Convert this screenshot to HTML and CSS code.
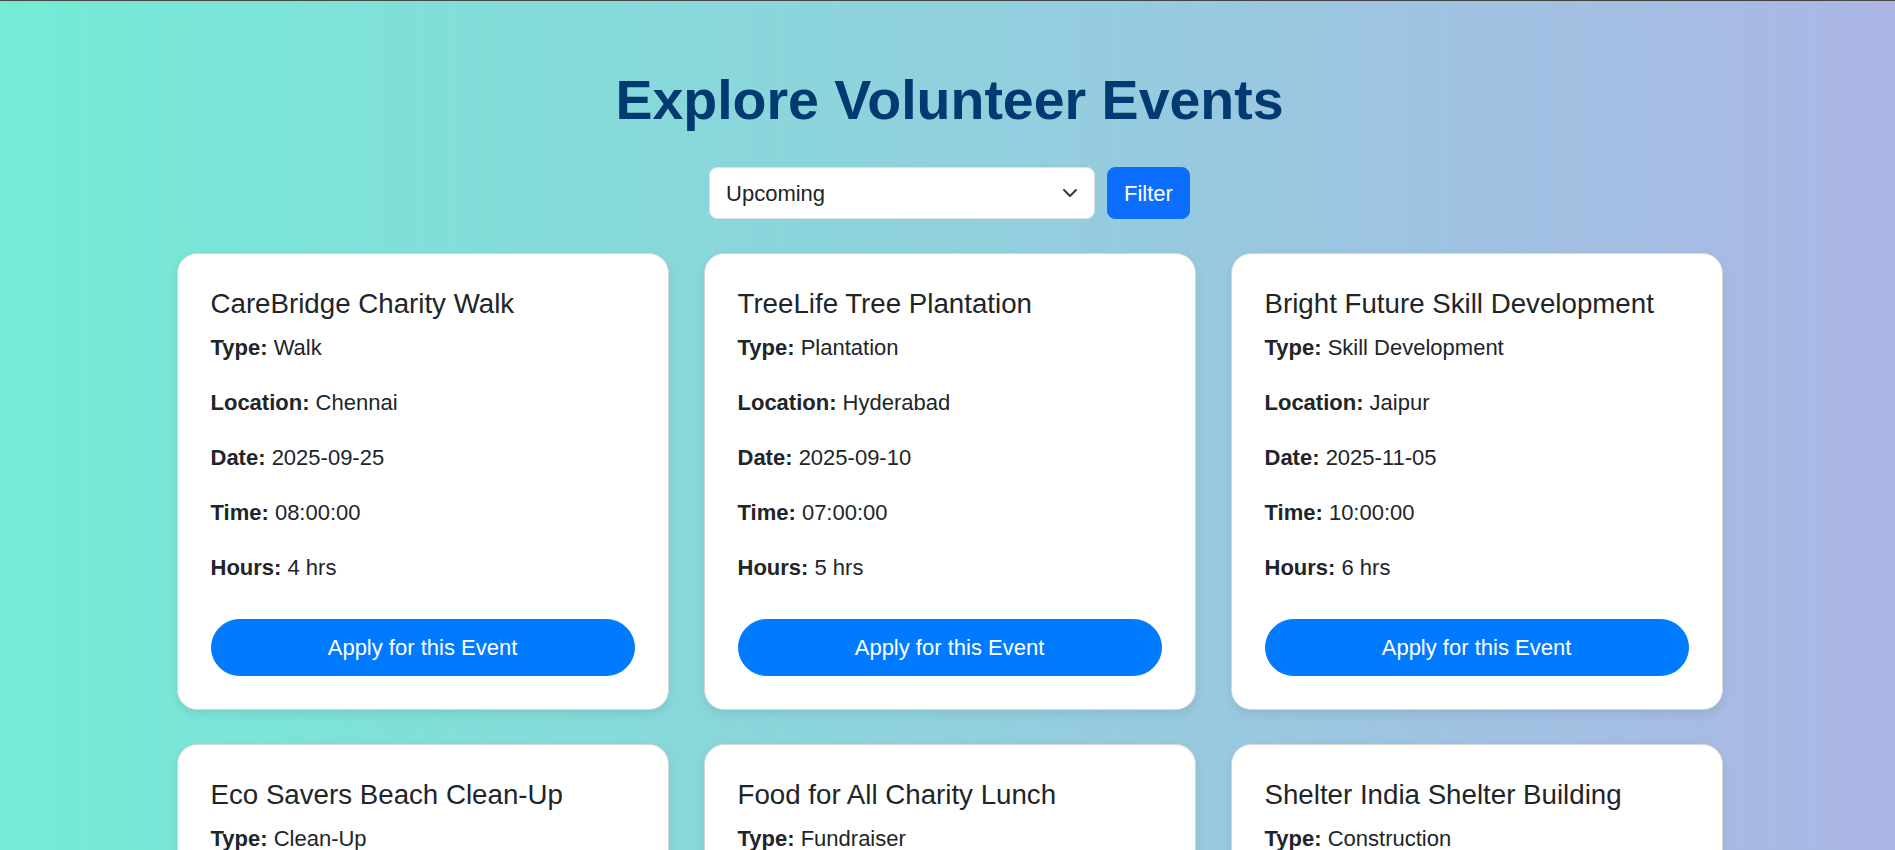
FILE: index.html
```html
<!DOCTYPE html>
<html lang="en">
<head>
<meta charset="utf-8">
<title>Explore Volunteer Events</title>
<link rel="stylesheet" href="styles.css">
</head>
<body>
<main class="page">
  <h1 class="page-title">Explore Volunteer Events</h1>
  <form class="filter-bar">
    <div class="select-wrap">
      <select class="filter-select">
        <option>Upcoming</option>
        <option>Past</option>
        <option>All</option>
      </select>
      <svg class="select-chevron" width="16" height="16" viewBox="0 0 16 16" aria-hidden="true"><path d="M2 5l6 6 6-6" fill="none" stroke="#343a40" stroke-width="2" stroke-linecap="round" stroke-linejoin="round"/></svg>
    </div>
    <button type="button" class="filter-btn">Filter</button>
  </form>

  <section class="event-grid">
    <article class="event-card">
      <h5 class="event-title">CareBridge Charity Walk</h5>
      <p><strong>Type:</strong> Walk</p>
      <p><strong>Location:</strong> Chennai</p>
      <p><strong>Date:</strong> 2025-09-25</p>
      <p><strong>Time:</strong> 08:00:00</p>
      <p><strong>Hours:</strong> 4 hrs</p>
      <button type="button" class="apply-btn">Apply for this Event</button>
    </article>
    <article class="event-card">
      <h5 class="event-title">TreeLife Tree Plantation</h5>
      <p><strong>Type:</strong> Plantation</p>
      <p><strong>Location:</strong> Hyderabad</p>
      <p><strong>Date:</strong> 2025-09-10</p>
      <p><strong>Time:</strong> 07:00:00</p>
      <p><strong>Hours:</strong> 5 hrs</p>
      <button type="button" class="apply-btn">Apply for this Event</button>
    </article>
    <article class="event-card">
      <h5 class="event-title">Bright Future Skill Development</h5>
      <p><strong>Type:</strong> Skill Development</p>
      <p><strong>Location:</strong> Jaipur</p>
      <p><strong>Date:</strong> 2025-11-05</p>
      <p><strong>Time:</strong> 10:00:00</p>
      <p><strong>Hours:</strong> 6 hrs</p>
      <button type="button" class="apply-btn">Apply for this Event</button>
    </article>
    <article class="event-card">
      <h5 class="event-title">Eco Savers Beach Clean-Up</h5>
      <p><strong>Type:</strong> Clean-Up</p>
      <p><strong>Location:</strong> Mumbai</p>
      <p><strong>Date:</strong> 2025-10-02</p>
      <p><strong>Time:</strong> 06:30:00</p>
      <p><strong>Hours:</strong> 3 hrs</p>
      <button type="button" class="apply-btn">Apply for this Event</button>
    </article>
    <article class="event-card">
      <h5 class="event-title">Food for All Charity Lunch</h5>
      <p><strong>Type:</strong> Fundraiser</p>
      <p><strong>Location:</strong> Bengaluru</p>
      <p><strong>Date:</strong> 2025-10-15</p>
      <p><strong>Time:</strong> 12:00:00</p>
      <p><strong>Hours:</strong> 4 hrs</p>
      <button type="button" class="apply-btn">Apply for this Event</button>
    </article>
    <article class="event-card">
      <h5 class="event-title">Shelter India Shelter Building</h5>
      <p><strong>Type:</strong> Construction</p>
      <p><strong>Location:</strong> Delhi</p>
      <p><strong>Date:</strong> 2025-12-01</p>
      <p><strong>Time:</strong> 09:00:00</p>
      <p><strong>Hours:</strong> 8 hrs</p>
      <button type="button" class="apply-btn">Apply for this Event</button>
    </article>
  </section>
</main>
</body>
</html>
```

FILE: styles.css
```css
* {
  box-sizing: border-box;
}

html {
  font-size: 22px;
}

body {
  margin: 0;
  border-top: 1px solid #454545;
  min-height: 100vh;
  background: linear-gradient(to right, #74ebd5, #acb6e5);
  font-family: "Liberation Sans", Arial, sans-serif;
  font-size: 22px;
  line-height: 1.5;
  color: #212529;
}

.page {
  padding: 66px 0 40px 4px;
}

.page-title {
  margin: 0 0 34px;
  text-align: center;
  font-size: 55.5px;
  line-height: 66px;
  font-weight: 700;
  color: #003a70;
}

.filter-bar {
  display: flex;
  justify-content: center;
  align-items: center;
  gap: 12px;
  margin: 0 0 34px;
}

.select-wrap {
  position: relative;
  width: 386px;
}

.filter-select {
  display: block;
  width: 100%;
  height: 52px;
  padding: 8.25px 49.5px 8.25px 16.5px;
  font-family: inherit;
  font-size: 22px;
  line-height: 1.5;
  color: #212529;
  background: #fff;
  border: 1px solid #dee2e6;
  border-radius: 8.25px;
  appearance: none;
  -webkit-appearance: none;
}

.select-chevron {
  position: absolute;
  right: 17px;
  top: 50%;
  width: 16px;
  height: 16px;
  margin-top: -8px;
  pointer-events: none;
}

.filter-btn {
  height: 52px;
  padding: 8.25px 16.5px;
  font-family: inherit;
  font-size: 22px;
  line-height: 1.5;
  color: #fff;
  background: #0d6efd;
  border: 1px solid #0d6efd;
  border-radius: 8.25px;
}

.event-grid {
  display: grid;
  grid-template-columns: repeat(3, 492px);
  gap: 34px 35px;
  width: 1546px;
  margin: 0 auto;
}

.event-card {
  display: flex;
  flex-direction: column;
  padding: 33px;
  background: #fff;
  border: 1px solid #d6d6d6;
  border-radius: 20px;
  box-shadow: 0 4px 10px rgba(0, 0, 0, 0.08);
}

.event-title {
  margin: 0 0 11px;
  font-size: 27.7px;
  line-height: 33px;
  font-weight: 400;
  color: #212529;
}

.event-card p {
  margin: 0 0 22px;
}

.event-card strong {
  font-weight: 700;
}

.apply-btn {
  margin-top: 13px;
  width: 100%;
  height: 57px;
  padding: 11px 22px;
  font-family: inherit;
  font-size: 22px;
  line-height: 1.5;
  color: #fff;
  background: #007bff;
  border: 1px solid #007bff;
  border-radius: 30px;
}
```
